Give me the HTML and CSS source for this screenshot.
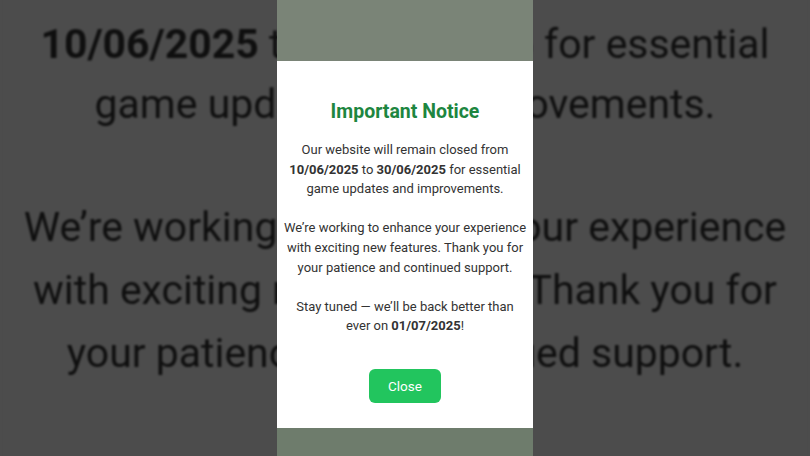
FILE: index.html
```html
<!DOCTYPE html>
<html lang="en">
<head>
    <meta charset="UTF-8">
    <meta name="viewport" content="width=device-width, initial-scale=1.0">
    <title>Important Notice</title>
    <link rel="stylesheet" href="styles.css">
</head>
<body>
    <!-- blurred, zoomed copy behind the phone frame -->
    <div class="backdrop" aria-hidden="true">
        <div class="screen">
            <div class="strip top"></div>
            <div class="dialog">
                <h2 class="title">Important Notice</h2>
                <p>Our website will remain closed from <b>10/06/2025</b> to <b>30/06/2025</b> for essential game updates and improvements.</p>
                <p>We’re working to enhance your experience with exciting new features. Thank you for your patience and continued support.</p>
                <p>Stay tuned — we’ll be back better than ever on <b>01/07/2025</b>!</p>
                <button class="close" type="button">Close</button>
            </div>
            <div class="strip bottom"></div>
        </div>
    </div>

    <div class="stage">
        <div class="screen">
            <div class="strip top"></div>
            <div class="dialog">
                <h2 class="title">Important Notice</h2>
                <p>Our website will remain closed from <b>10/06/2025</b> to <b>30/06/2025</b> for essential game updates and improvements.</p>
                <p>We’re working to enhance your experience with exciting new features. Thank you for your patience and continued support.</p>
                <p>Stay tuned — we’ll be back better than ever on <b>01/07/2025</b>!</p>
                <button class="close" type="button">Close</button>
            </div>
            <div class="strip bottom"></div>
        </div>
    </div>
</body>
</html>
```

FILE: styles.css
```css
html, body {
    margin: 0;
    padding: 0;
    width: 810px;
    height: 456px;
    overflow: hidden;
    font-family: Roboto, "Liberation Sans", sans-serif;
    background-color: #4d4d4d;
}

.backdrop {
    position: absolute;
    inset: 0;
    overflow: hidden;
    display: flex;
    justify-content: center;
    align-items: center;
}
.backdrop .screen {
    transform: scale(3.15);
    filter: brightness(0.3) blur(0.3px);
}

.stage {
    position: relative;
    height: 456px;
    display: flex;
    justify-content: center;
}

.screen {
    width: 256px;
    height: 456px;
    flex-shrink: 0;
    display: flex;
    flex-direction: column;
    background-color: #fff;
}

.strip {
    background-color: #7a8477;
}
.strip.top {
    height: 61px;
}
.strip.bottom {
    height: 28px;
    background-color: #6e7c6c;
}

.dialog {
    flex: 1;
    padding: 39px 6px 0;
    text-align: center;
    color: #333;
}

.title {
    margin: 0 0 16px;
    font-size: 19.5px;
    line-height: 24px;
    font-weight: 700;
    color: #1d8640;
}

.dialog p {
    margin: 0 0 19.6px;
    font-size: 13px;
    line-height: 19.6px;
}
.dialog p:last-of-type {
    margin-bottom: 33px;
}
.dialog b {
    font-weight: 700;
}

.close {
    width: 72px;
    height: 34px;
    border: none;
    border-radius: 6px;
    background-color: #22c55e;
    color: #fff;
    font-family: inherit;
    font-size: 13.5px;
    cursor: pointer;
}
```
